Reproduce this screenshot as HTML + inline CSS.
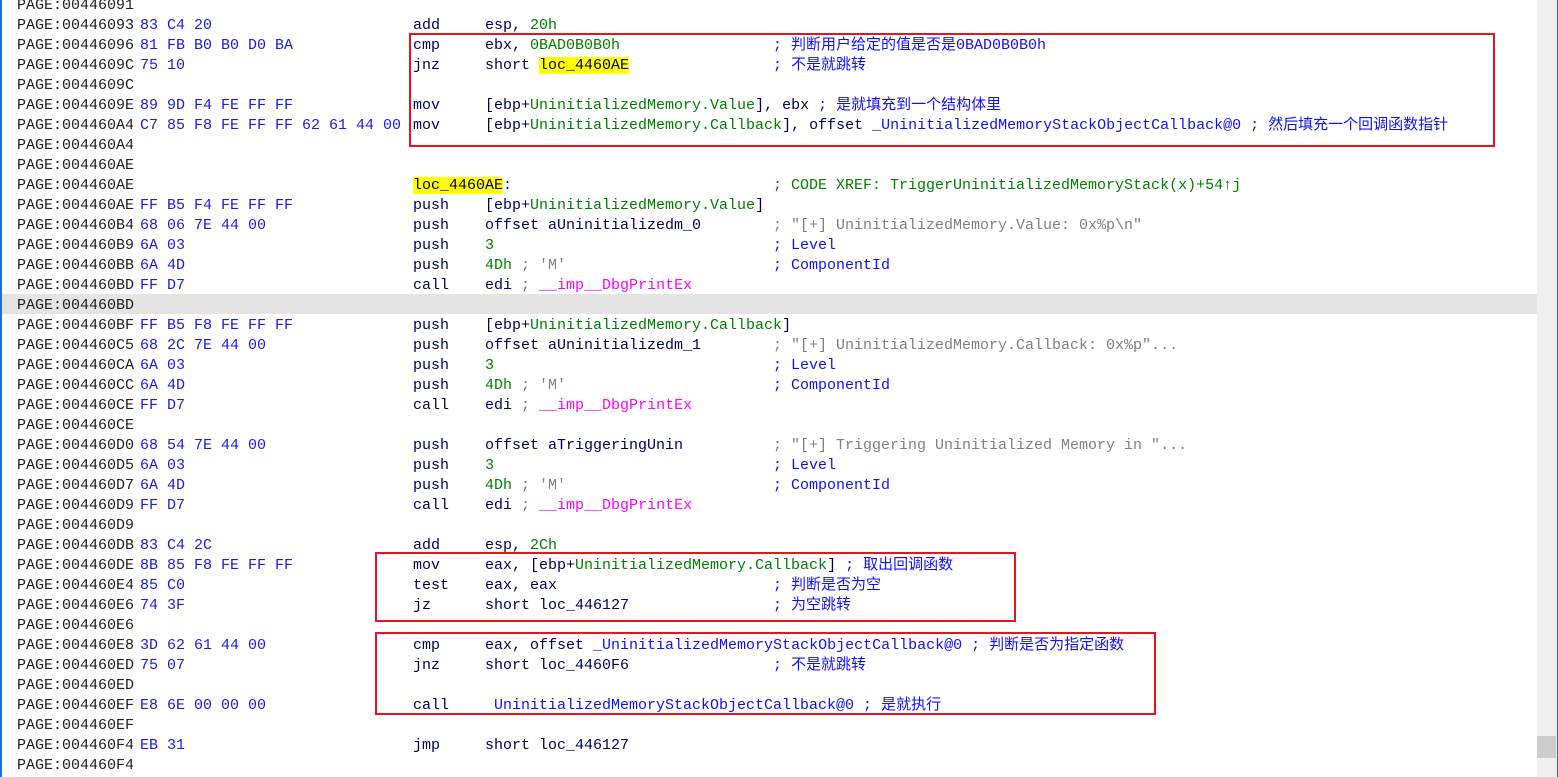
<!DOCTYPE html>
<html><head><meta charset="utf-8"><style>
html,body{margin:0;padding:0;}
body{width:1558px;height:777px;background:#fff;position:relative;overflow:hidden;font-family:"Liberation Mono","Noto Sans CJK SC",monospace;font-size:15px;}
.l{position:absolute;left:0;height:20px;line-height:20px;width:1537px;white-space:pre;margin-top:2px;}
.l > span{position:absolute;top:0;}
.a{left:17px;color:#202020}
.b{left:140px;color:#1a1aee}
.m{left:413px;color:#000060}
.o{left:485px;color:#000060}
.c{left:773px;color:#1010ff}
.g{color:#008000}.gr{color:#808080}.mg{color:#ff00ff}.bl{color:#1010ff}.y{background:#ffff00}
.box{position:absolute;border:2px solid #e8131f;}
</style></head><body>
<div style="position:absolute;left:0;top:0;width:2px;height:777px;background:#1e73c8"></div>
<div style="position:absolute;right:0;top:0;width:1px;height:777px;background:#1e73c8"></div>
<div style="position:absolute;left:1537px;top:0;width:20px;height:777px;background:#f0f0f0"></div>
<div style="position:absolute;left:1537px;top:736px;width:19px;height:22px;background:#cdcdcd"></div>
<div style="position:absolute;left:2px;top:294px;width:1535px;height:20px;background:#e4e4e4"></div>

<div class="l" style="top:-6px"><span class="a">PAGE:00446091</span></div>
<div class="l" style="top:14px"><span class="a">PAGE:00446093</span><span class="b">83 C4 20</span><span class="m">add</span><span class="o">esp, <span class="g">20h</span></span></div>
<div class="l" style="top:34px"><span class="a">PAGE:00446096</span><span class="b">81 FB B0 B0 D0 BA</span><span class="m">cmp</span><span class="o">ebx, <span class="g">0BAD0B0B0h</span></span><span class="c">; 判断用户给定的值是否是0BAD0B0B0h</span></div>
<div class="l" style="top:54px"><span class="a">PAGE:0044609C</span><span class="b">75 10</span><span class="m">jnz</span><span class="o">short <span class="y">loc_4460AE</span></span><span class="c">; 不是就跳转</span></div>
<div class="l" style="top:74px"><span class="a">PAGE:0044609C</span></div>
<div class="l" style="top:94px"><span class="a">PAGE:0044609E</span><span class="b">89 9D F4 FE FF FF</span><span class="m">mov</span><span class="o">[ebp+<span class="g">UninitializedMemory.Value</span>], ebx <span class="bl">; 是就填充到一个结构体里</span></span></div>
<div class="l" style="top:114px"><span class="a">PAGE:004460A4</span><span class="b">C7 85 F8 FE FF FF 62 61 44 00</span><span class="m">mov</span><span class="o">[ebp+<span class="g">UninitializedMemory.Callback</span>], offset <span class="bl">_UninitializedMemoryStackObjectCallback@0 ; 然后填充一个回调函数指针</span></span></div>
<div class="l" style="top:134px"><span class="a">PAGE:004460A4</span></div>
<div class="l" style="top:154px"><span class="a">PAGE:004460AE</span></div>
<div class="l" style="top:174px"><span class="a">PAGE:004460AE</span><span class="m"><span class="y">loc_4460AE</span>:</span><span class="c g">; CODE XREF: TriggerUninitializedMemoryStack(x)+54↑j</span></div>
<div class="l" style="top:194px"><span class="a">PAGE:004460AE</span><span class="b">FF B5 F4 FE FF FF</span><span class="m">push</span><span class="o">[ebp+<span class="g">UninitializedMemory.Value</span>]</span></div>
<div class="l" style="top:214px"><span class="a">PAGE:004460B4</span><span class="b">68 06 7E 44 00</span><span class="m">push</span><span class="o">offset aUninitializedm_0</span><span class="c gr">; "[+] UninitializedMemory.Value: 0x%p\n"</span></div>
<div class="l" style="top:234px"><span class="a">PAGE:004460B9</span><span class="b">6A 03</span><span class="m">push</span><span class="o g">3</span><span class="c">; Level</span></div>
<div class="l" style="top:254px"><span class="a">PAGE:004460BB</span><span class="b">6A 4D</span><span class="m">push</span><span class="o"><span class="g">4Dh</span> <span class="gr">; 'M'</span></span><span class="c">; ComponentId</span></div>
<div class="l" style="top:274px"><span class="a">PAGE:004460BD</span><span class="b">FF D7</span><span class="m">call</span><span class="o">edi <span class="gr">;</span> <span class="mg">__imp__DbgPrintEx</span></span></div>
<div class="l" style="top:294px"><span class="a">PAGE:004460BD</span></div>
<div class="l" style="top:314px"><span class="a">PAGE:004460BF</span><span class="b">FF B5 F8 FE FF FF</span><span class="m">push</span><span class="o">[ebp+<span class="g">UninitializedMemory.Callback</span>]</span></div>
<div class="l" style="top:334px"><span class="a">PAGE:004460C5</span><span class="b">68 2C 7E 44 00</span><span class="m">push</span><span class="o">offset aUninitializedm_1</span><span class="c gr">; "[+] UninitializedMemory.Callback: 0x%p"...</span></div>
<div class="l" style="top:354px"><span class="a">PAGE:004460CA</span><span class="b">6A 03</span><span class="m">push</span><span class="o g">3</span><span class="c">; Level</span></div>
<div class="l" style="top:374px"><span class="a">PAGE:004460CC</span><span class="b">6A 4D</span><span class="m">push</span><span class="o"><span class="g">4Dh</span> <span class="gr">; 'M'</span></span><span class="c">; ComponentId</span></div>
<div class="l" style="top:394px"><span class="a">PAGE:004460CE</span><span class="b">FF D7</span><span class="m">call</span><span class="o">edi <span class="gr">;</span> <span class="mg">__imp__DbgPrintEx</span></span></div>
<div class="l" style="top:414px"><span class="a">PAGE:004460CE</span></div>
<div class="l" style="top:434px"><span class="a">PAGE:004460D0</span><span class="b">68 54 7E 44 00</span><span class="m">push</span><span class="o">offset aTriggeringUnin</span><span class="c gr">; "[+] Triggering Uninitialized Memory in "...</span></div>
<div class="l" style="top:454px"><span class="a">PAGE:004460D5</span><span class="b">6A 03</span><span class="m">push</span><span class="o g">3</span><span class="c">; Level</span></div>
<div class="l" style="top:474px"><span class="a">PAGE:004460D7</span><span class="b">6A 4D</span><span class="m">push</span><span class="o"><span class="g">4Dh</span> <span class="gr">; 'M'</span></span><span class="c">; ComponentId</span></div>
<div class="l" style="top:494px"><span class="a">PAGE:004460D9</span><span class="b">FF D7</span><span class="m">call</span><span class="o">edi <span class="gr">;</span> <span class="mg">__imp__DbgPrintEx</span></span></div>
<div class="l" style="top:514px"><span class="a">PAGE:004460D9</span></div>
<div class="l" style="top:534px"><span class="a">PAGE:004460DB</span><span class="b">83 C4 2C</span><span class="m">add</span><span class="o">esp, <span class="g">2Ch</span></span></div>
<div class="l" style="top:554px"><span class="a">PAGE:004460DE</span><span class="b">8B 85 F8 FE FF FF</span><span class="m">mov</span><span class="o">eax, [ebp+<span class="g">UninitializedMemory.Callback</span>] <span class="bl">; 取出回调函数</span></span></div>
<div class="l" style="top:574px"><span class="a">PAGE:004460E4</span><span class="b">85 C0</span><span class="m">test</span><span class="o">eax, eax</span><span class="c">; 判断是否为空</span></div>
<div class="l" style="top:594px"><span class="a">PAGE:004460E6</span><span class="b">74 3F</span><span class="m">jz</span><span class="o">short loc_446127</span><span class="c">; 为空跳转</span></div>
<div class="l" style="top:614px"><span class="a">PAGE:004460E6</span></div>
<div class="l" style="top:634px"><span class="a">PAGE:004460E8</span><span class="b">3D 62 61 44 00</span><span class="m">cmp</span><span class="o">eax, offset <span class="bl">_UninitializedMemoryStackObjectCallback@0 ; 判断是否为指定函数</span></span></div>
<div class="l" style="top:654px"><span class="a">PAGE:004460ED</span><span class="b">75 07</span><span class="m">jnz</span><span class="o">short loc_4460F6</span><span class="c">; 不是就跳转</span></div>
<div class="l" style="top:674px"><span class="a">PAGE:004460ED</span></div>
<div class="l" style="top:694px"><span class="a">PAGE:004460EF</span><span class="b">E8 6E 00 00 00</span><span class="m">call</span><span class="o bl"> UninitializedMemoryStackObjectCallback@0 ; 是就执行</span></div>
<div class="l" style="top:714px"><span class="a">PAGE:004460EF</span></div>
<div class="l" style="top:734px"><span class="a">PAGE:004460F4</span><span class="b">EB 31</span><span class="m">jmp</span><span class="o">short loc_446127</span></div>
<div class="l" style="top:754px"><span class="a">PAGE:004460F4</span></div>

<div class="box" style="left:409px;top:33px;width:1082px;height:110px"></div>
<div class="box" style="left:375px;top:552px;width:637px;height:66px"></div>
<div class="box" style="left:375px;top:632px;width:777px;height:79px"></div>
</body></html>
